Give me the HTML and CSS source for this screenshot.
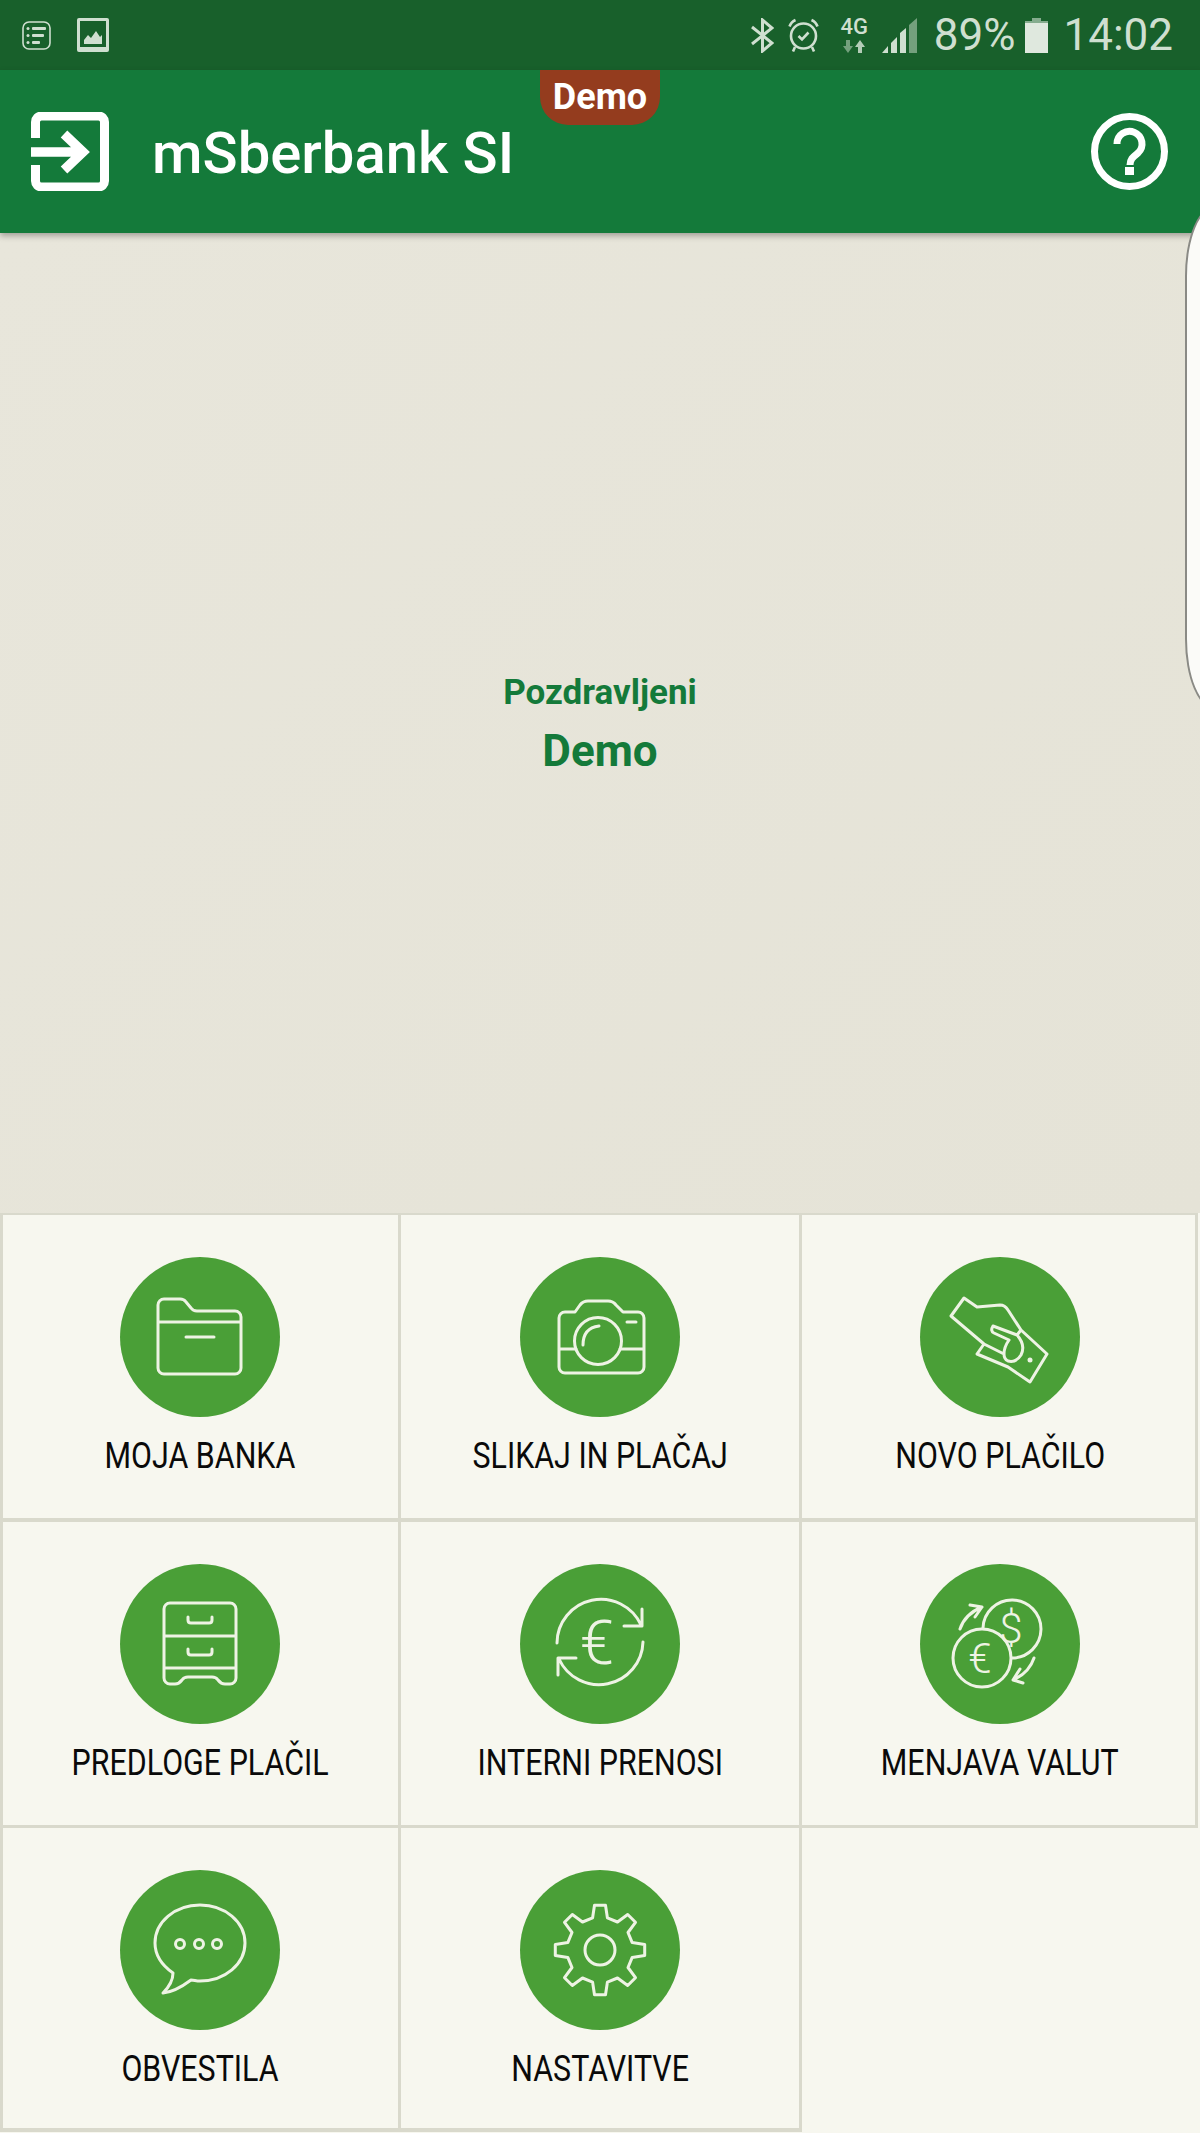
FILE: index.html
```html
<!DOCTYPE html>
<html lang="sl">
<head>
    <meta charset="UTF-8">
    <meta name="viewport" content="width=device-width, initial-scale=1.0">
    <title>mSberbank SI</title>
    <link rel="stylesheet" href="styles.css">
</head>
<body>
    <div class="statusbar">
        <div class="status-left">
            <svg class="ico-list" viewBox="0 0 29 29">
                <rect x="1" y="1" width="27" height="27" rx="6" fill="none" stroke="currentColor" stroke-width="1.6"/>
                <circle cx="6" cy="7.5" r="1.5" fill="currentColor"/><rect x="10" y="6" width="14" height="3" rx="1" fill="currentColor"/>
                <circle cx="6" cy="14.5" r="1.5" fill="currentColor"/><rect x="10" y="13" width="12" height="3" rx="1" fill="currentColor"/>
                <circle cx="6" cy="21.5" r="1.5" fill="currentColor"/><rect x="10" y="20" width="8" height="3" rx="1" fill="currentColor"/>
            </svg>
            <svg class="ico-image" viewBox="0 0 32 34">
                <path fill="currentColor" fill-rule="evenodd" d="M2 0H30a2 2 0 0 1 2 2V32a2 2 0 0 1-2 2H2a2 2 0 0 1-2-2V2a2 2 0 0 1 2-2ZM3 3V29H29V3ZM7 26V22L11 17L14 20L19 13L23 19L25 17V26Z"/>
            </svg>
        </div>
        <div class="status-right">
            <svg class="ico-bt" viewBox="0 0 23 35">
                <path fill="none" stroke="currentColor" stroke-width="3" d="M1 9L21 25L11.5 33V2L21 10L1 26"/>
            </svg>
            <svg class="ico-alarm" viewBox="0 0 31 34">
                <circle cx="15.5" cy="18" r="12.500" fill="none" stroke="currentColor" stroke-width="2.6"/>
                <path fill="none" stroke="currentColor" stroke-width="2.6" d="M1.500 8.500Q3 4 7.500 2M29.500 8.500Q28 4 23.500 2M10.500 18L14 21.500L20.500 14.500M7 29L5 33.500M24 29L26 33.500"/>
            </svg>
            <div class="net">
                <span class="net-label">4G</span>
                <svg class="ico-arrows" viewBox="0 0 22 13">
                    <path fill="currentColor" opacity=".5" d="M3 0H7V6H10L5 13L0 6H3Z"/>
                    <path fill="currentColor" opacity=".85" d="M15 13H19V7H22L17 0L12 7H15Z"/>
                </svg>
            </div>
            <svg class="ico-signal" viewBox="0 0 35 35">
                <path fill="currentColor" d="M0 35L6 28V35Z"/>
                <path fill="currentColor" d="M9 25L15 19V35H9Z"/>
                <path fill="currentColor" d="M18 15L24 10V35H18Z"/>
                <path fill="currentColor" opacity=".5" d="M27 7L35 0V35H27Z"/>
            </svg>
            <span class="status-pct">89%</span>
            <svg class="ico-battery" viewBox="0 0 23 35">
                <path fill="currentColor" opacity=".6" d="M7 0H16V3H23V9H0V3H7Z"/>
                <rect y="5" width="23" height="30" fill="#dfe8de"/>
            </svg>
            <span class="status-time">14:02</span>
        </div>
    </div>

    <header class="appbar">
        <svg class="ico-login" viewBox="0 0 78 79">
            <path fill="none" stroke="#fff" stroke-width="9" d="M4.5 26V10a6 6 0 0 1 6-6H67.5a6 6 0 0 1 6 6V69a6 6 0 0 1-6 6H10.5a6 6 0 0 1-6-6V53"/>
            <path fill="none" stroke="#fff" stroke-width="9.5" d="M0 40H52M33 22L52 40L33 58"/>
        </svg>
        <span class="app-title">mSberbank SI</span>
        <span class="demo-badge">Demo</span>
        <svg class="ico-help" viewBox="0 0 77 77">
            <circle cx="38.5" cy="38.5" r="35" fill="none" stroke="#fff" stroke-width="7"/>
            <path fill="none" stroke="#fff" stroke-width="7" d="M26 31a12.500 12.500 0 1 1 21 9c-5 4-8 6-8 12"/>
            <rect x="34" y="54" width="9" height="8" fill="#fff"/>
        </svg>
    </header>

    <div class="side-panel"></div>

    <main class="stage">
        <p class="hello">Pozdravljeni</p>
        <p class="user">Demo</p>
    </main>

    <nav class="menu">
        <a class="tile tile-start">
            <svg class="tile-icon" viewBox="0 0 160 160">
                <circle cx="80" cy="80" r="80" class="disc"/>
                <path class="line" d="M38 65V48a6 6 0 0 1 6-6H60q4 0 6 3l5 6q2 3 6 3H115a6 6 0 0 1 6 6V111a6 6 0 0 1-6 6H44a6 6 0 0 1-6-6V65H121M66 80H94"/>
            </svg>
            <span class="tile-label">MOJA BANKA</span>
        </a>
        <a class="tile">
            <svg class="tile-icon" viewBox="0 0 160 160">
                <circle cx="80" cy="80" r="80" class="disc"/>
                <path class="line" d="M55 55L60 48Q63 44 68 44H88Q93 44 96 48L103 55H118a6 6 0 0 1 6 6V110a6 6 0 0 1-6 6H45a6 6 0 0 1-6-6V61a6 6 0 0 1 6-6ZM39 92H56M100 92H124M107 65H116M63 88Q63 71 79 69"/>
                <circle cx="78" cy="84" r="23.500" class="line"/>
            </svg>
            <span class="tile-label">SLIKAJ IN PLAČAJ</span>
        </a>
        <a class="tile tile-end">
            <svg class="tile-icon" viewBox="0 0 160 160">
                <circle cx="80" cy="80" r="80" class="disc"/>
                <path class="line" d="M101 73L88 53Q85 48 80 48L57 50L44 41L31 59L64 87L84 97M64 87L57 97L88 110L110 125L127 97L101 73L97 78M73 69Q70 74 74 76L89 83M73 69L97 78M97 78Q106 88 101 98Q96 106 88 104Q84 102 84 97Q84 90 89 83"/>
                <circle cx="110" cy="103" r="2.500" fill="#eef3e4"/>
            </svg>
            <span class="tile-label">NOVO PLAČILO</span>
        </a>
        <a class="tile tile-start">
            <svg class="tile-icon" viewBox="0 0 160 160">
                <circle cx="80" cy="80" r="80" class="disc"/>
                <path class="line" d="M44 104V45a6 6 0 0 1 6-6H110a6 6 0 0 1 6 6V114a6 6 0 0 1-6 6H105Q101 120 98 116Q96 113 92 113H68Q64 113 62 116Q59 120 55 120H50a6 6 0 0 1-6-6V104H116M44 72H116M68 53V56q0 3 3 3H89q3 0 3-3V53M68 85V88q0 3 3 3H89q3 0 3-3V85"/>
            </svg>
            <span class="tile-label">PREDLOGE PLAČIL</span>
        </a>
        <a class="tile">
            <svg class="tile-icon" viewBox="0 0 160 160">
                <circle cx="80" cy="80" r="80" class="disc"/>
                <path class="line" d="M37 79A44 44 0 0 1 121 61M104 62H122V45M123 78A44 44 0 0 1 39 95M56 94H38V111"/>
                <text x="77" y="100" class="glyph glyph-lg">€</text>
            </svg>
            <span class="tile-label">INTERNI PRENOSI</span>
        </a>
        <a class="tile tile-end">
            <svg class="tile-icon" viewBox="0 0 160 160">
                <circle cx="80" cy="80" r="80" class="disc"/>
                <path class="line" d="M63 64A29 29 0 1 1 92 94"/>
                <circle cx="62" cy="94" r="29" class="line"/>
                <path class="line" d="M40 65Q45 50 62 43M50 41L62 43L55 53M114 94Q109 109 93 116M100 105L93 116L103 119"/>
                <text x="91" y="79" class="glyph glyph-sm">$</text>
                <text x="60" y="109" class="glyph glyph-sm">€</text>
            </svg>
            <span class="tile-label">MENJAVA VALUT</span>
        </a>
        <a class="tile tile-start">
            <svg class="tile-icon" viewBox="0 0 160 160">
                <circle cx="80" cy="80" r="80" class="disc"/>
                <path class="line" d="M53 103C43 96 35 86 35 73C35 52 55 35 80 35C105 35 125 52 125 73C125 94 105 111 80 111C76 111 74 110 71 110C63 116 53 122 43 123C49 117 53 111 53 103Z"/>
                <circle cx="60" cy="74" r="4.500" class="line"/>
                <circle cx="79" cy="74" r="4.500" class="line"/>
                <circle cx="97" cy="74" r="4.500" class="line"/>
            </svg>
            <span class="tile-label">OBVESTILA</span>
        </a>
        <a class="tile">
            <svg class="tile-icon" viewBox="0 0 160 160">
                <circle cx="80" cy="80" r="80" class="disc"/>
                <g transform="translate(80 80)">
                    <polygon class="line" points="-7.400,-32.200 -5.500,-44.700 5.500,-44.700 7.400,-32.200 17.500,-28 27.700,-35.500 35.500,-27.700 28,-17.500 32.200,-7.400 44.700,-5.500 44.700,5.500 32.200,7.400 28,17.500 35.500,27.700 27.700,35.500 17.500,28 7.400,32.200 5.500,44.700 -5.500,44.700 -7.400,32.200 -17.500,28 -27.700,35.500 -35.500,27.700 -28,17.500 -32.200,7.400 -44.700,5.500 -44.700,-5.500 -32.200,-7.400 -28,-17.500 -35.500,-27.700 -27.700,-35.500 -17.500,-28"/>
                    <circle r="15" class="line"/>
                </g>
            </svg>
            <span class="tile-label">NASTAVITVE</span>
        </a>
        <a class="tile tile-empty"></a>
    </nav>
</body>
</html>
```

FILE: styles.css
```css
* {
    box-sizing: border-box;
}
html, body {
    margin: 0;
    height: 100%;
}
body {
    position: relative;
    width: 1200px;
    height: 2133px;
    overflow: hidden;
    display: flex;
    flex-direction: column;
    font-family: Roboto, "Liberation Sans", sans-serif;
    background-color: #e7e5da;
}

/* status bar */
.statusbar {
    height: 70px;
    flex: none;
    display: flex;
    justify-content: space-between;
    align-items: center;
    padding: 0 27px 0 22px;
    background-color: #18602b;
    color: #cfdfd0;
}
.status-left, .status-right {
    display: flex;
    align-items: center;
}
.ico-list {
    width: 29px;
    height: 29px;
    margin-right: 26px;
}
.ico-image {
    width: 32px;
    height: 34px;
}
.ico-bt {
    width: 23px;
    height: 35px;
    margin-right: 14px;
}
.ico-alarm {
    width: 31px;
    height: 34px;
    margin-right: 22px;
}
.net {
    width: 27px;
    margin-right: 14px;
    display: flex;
    flex-direction: column;
    align-items: center;
}
.net-label {
    font-size: 22px;
    font-weight: 500;
    line-height: 20px;
}
.ico-arrows {
    width: 22px;
    height: 13px;
    margin-top: 3px;
}
.ico-signal {
    width: 35px;
    height: 35px;
    margin-right: 17px;
}
.status-pct, .status-time {
    font-size: 44px;
    line-height: 50px;
}
.ico-battery {
    width: 23px;
    height: 35px;
    margin: 0 15px 0 10px;
}

/* app bar */
.appbar {
    position: relative;
    z-index: 2;
    height: 163px;
    flex: none;
    display: flex;
    align-items: center;
    padding: 0 32px 0 31px;
    background-color: #147a3a;
    box-shadow: 0 3px 6px rgba(0, 0, 0, .3);
}
.ico-login {
    width: 78px;
    height: 79px;
}
.app-title {
    margin: 2px 0 0 43px;
    color: #fff;
    font-size: 58px;
    font-weight: 500;
}
.demo-badge {
    position: absolute;
    left: 540px;
    top: 0;
    width: 120px;
    height: 55px;
    background-color: #943c1e;
    border-radius: 0 0 28px 28px;
    color: #fff;
    font-size: 36px;
    font-weight: 700;
    line-height: 54px;
    text-align: center;
}
.ico-help {
    width: 77px;
    height: 77px;
    margin-left: auto;
}

/* drawer peeking in from the right */
.side-panel {
    position: absolute;
    z-index: 3;
    left: 1185px;
    top: 206px;
    width: 60px;
    height: 503px;
    background-color: #fbfbf8;
    border: 2px solid #8a8a85;
    border-radius: 30px / 70px;
}

/* greeting */
.stage {
    flex: 1;
    display: flex;
    flex-direction: column;
    align-items: center;
    justify-content: center;
    background: linear-gradient(135deg, #e8e6db, #e5e3d7);
    color: #147a3a;
    font-weight: 700;
}
.hello {
    margin: 0;
    font-size: 35px;
    line-height: 44px;
}
.user {
    margin: 11px 0 0;
    font-size: 44px;
    line-height: 50px;
}

/* menu grid */
.menu {
    height: 920px;
    flex: none;
    display: grid;
    grid-template-columns: 395px 398px 393px;
    grid-template-rows: 303px 303px 300px;
    gap: 3.5px 3px;
    padding: 2px 0 0 3px;
    background: linear-gradient(#d9d9cc, #d9d9cc) no-repeat 0 0 / 1198px 919px #f7f7ef;
}
.tile {
    display: flex;
    flex-direction: column;
    align-items: center;
    padding-top: 42px;
    background-color: #f7f7ef;
}
.tile-start {
    padding-right: 1px;
}
.tile-end {
    padding-left: 3px;
}
.tile-empty {
    margin: 0 -7px -5px 0;
}
.tile-icon {
    width: 160px;
    height: 160px;
    flex: none;
}
.disc {
    fill: #4a9f37;
}
.line {
    fill: none;
    stroke: #eef3e4;
    stroke-width: 3;
    stroke-linejoin: round;
    stroke-linecap: round;
}
.glyph {
    fill: #eef3e4;
    font-weight: 300;
    text-anchor: middle;
}
.glyph-lg {
    font-size: 62px;
}
.glyph-sm {
    font-size: 42px;
}
.tile-label {
    margin-top: 20px;
    color: #0a0a0a;
    font-size: 36px;
    line-height: 38px;
    white-space: nowrap;
    transform: scaleX(.845);
}
```
